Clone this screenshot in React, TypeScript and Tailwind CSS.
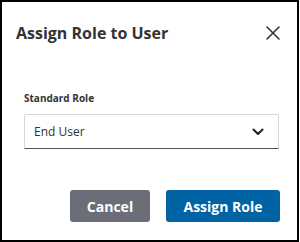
import React from 'react';

const App: React.FC = () => {
  return (
    <div className="w-[299px] h-[242px] bg-white border-2 border-black flex flex-col font-['Open_Sans',sans-serif] text-[#333]">
      {/* Header */}
      <div className="flex items-center justify-between pl-[14px] pr-[14px] pt-[19px]">
        <h2 className="text-[16px] font-bold leading-[24px]">Assign Role to User</h2>
        <button className="w-[20px] h-[20px] flex items-center justify-center text-[#333]">
          <svg width="14" height="14" viewBox="0 0 14 14" fill="none" stroke="currentColor" strokeWidth="1.6" strokeLinecap="round">
            <path d="M1 1L13 13M13 1L1 13" />
          </svg>
        </button>
      </div>

      {/* Body */}
      <div className="pl-[22px] pr-[18px] pt-[46px]">
        <label className="block text-[10px] font-bold leading-[14px] mb-[9px]">Standard Role</label>
        <div className="h-[35px] flex items-center justify-between pl-[9px] pr-[14px] border border-[#d6d6d6] border-b-[#555] rounded-t-[2px]">
          <span className="text-[12px]">End User</span>
          <svg width="12" height="8" viewBox="0 0 12 8" fill="none" stroke="#222" strokeWidth="2" strokeLinecap="round" strokeLinejoin="round">
            <path d="M1.5 1.5L6 6L10.5 1.5" />
          </svg>
        </div>
      </div>

      {/* Footer */}
      <div className="flex justify-end gap-[16px] pr-[17px] mt-[41px]">
        <button className="w-[80px] h-[32px] rounded-[3px] bg-[#6b6e78] text-white text-[14px] font-bold">Cancel</button>
        <button className="w-[114px] h-[32px] rounded-[3px] bg-[#0063a3] text-white text-[14px] font-bold">Assign Role</button>
      </div>
    </div>
  );
};

export default App;
